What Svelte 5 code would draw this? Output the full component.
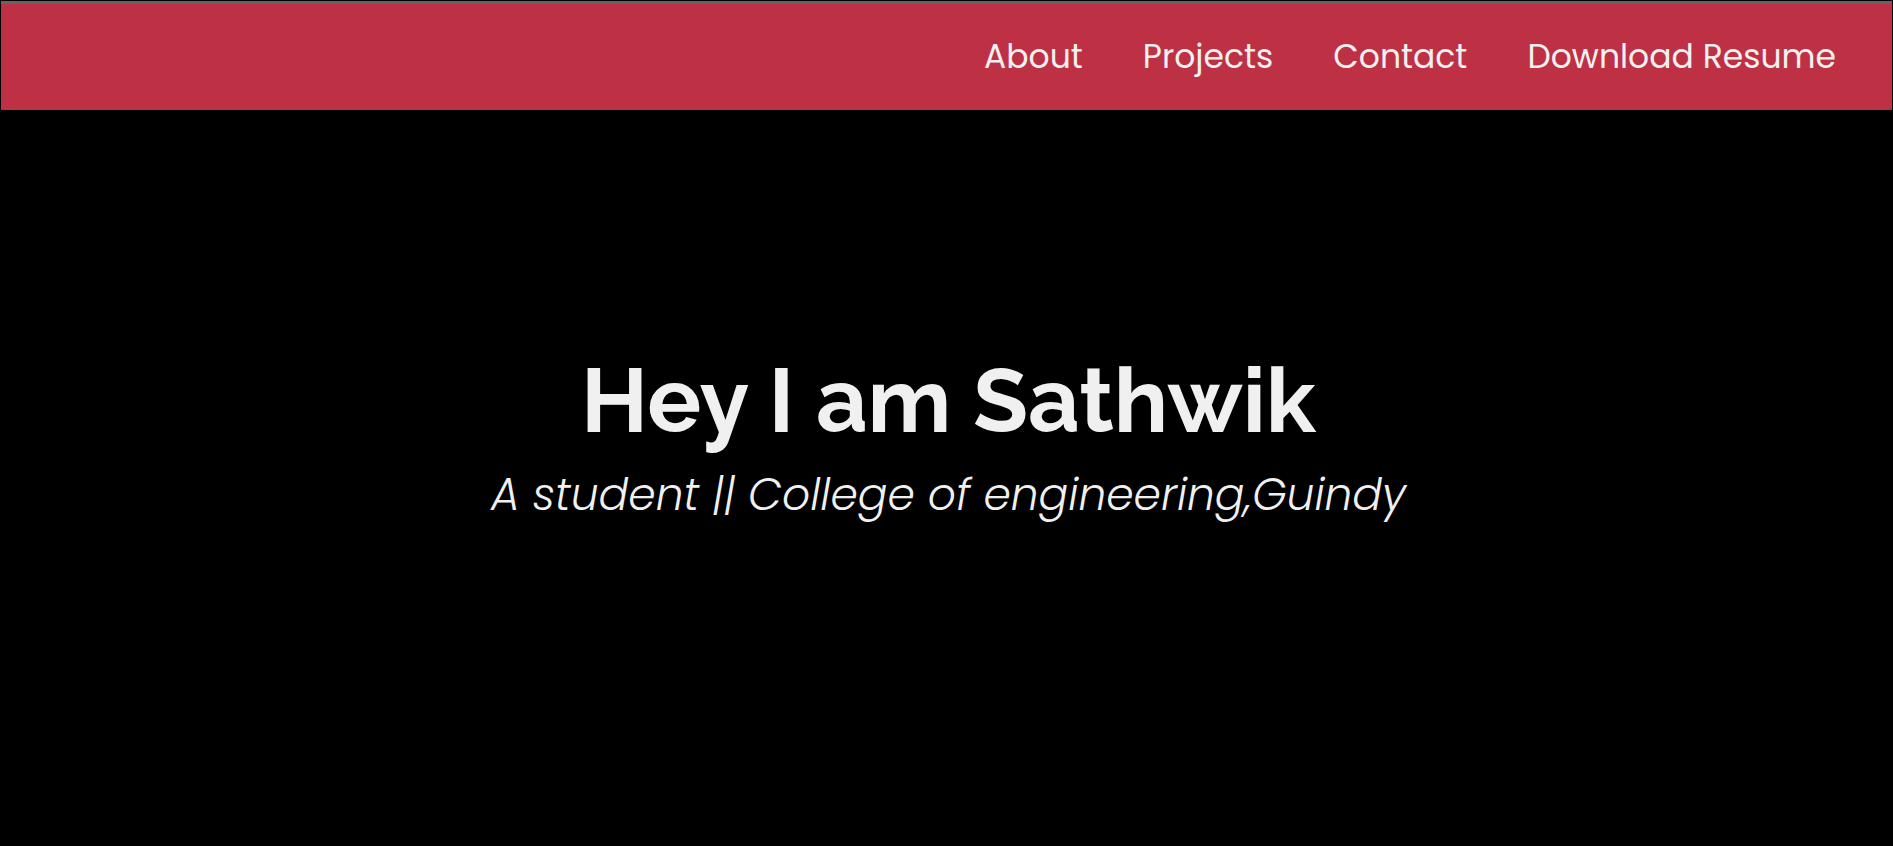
<script>
  const links = [
    { label: 'About', href: '#about' },
    { label: 'Projects', href: '#projects' },
    { label: 'Contact', href: '#contact' },
    { label: 'Download Resume', href: '#resume' }
  ];
</script>

<div class="page">
  <nav class="nav">
    {#each links as link}
      <a href={link.href}>{link.label}</a>
    {/each}
  </nav>
  <main class="welcome">
    <h1>Hey I am Sathwik</h1>
    <p>A student || College of engineering,Guindy</p>
  </main>
</div>

<style>
  :global(body) {
    margin: 0;
    background: #000;
  }
  .page {
    box-sizing: border-box;
    min-height: 100vh;
    display: flex;
    flex-direction: column;
    padding: 1px 1px 0;
    background: #000;
    color: #f0f0f0;
    font-family: Poppins, Inter, sans-serif;
  }
  .nav {
    display: flex;
    justify-content: flex-end;
    gap: 60px;
    padding: 29px 56px;
    border-top: 3px solid #686365;
    background: #be3144;
  }
  .nav a {
    color: #f0f0f0;
    font-size: 33px;
    line-height: 48px;
    text-decoration: none;
  }
  .welcome {
    flex: 1;
    display: flex;
    flex-direction: column;
    align-items: center;
    justify-content: center;
    padding: 0 0 78px 4px;
    text-align: center;
  }
  h1 {
    margin: 0;
    font-family: Raleway, Lato, sans-serif;
    font-size: 90px;
    line-height: 112px;
    font-weight: 700;
  }
  p {
    margin: 0;
    font-size: 44px;
    line-height: 78px;
    font-weight: 300;
    font-style: italic;
  }
</style>
